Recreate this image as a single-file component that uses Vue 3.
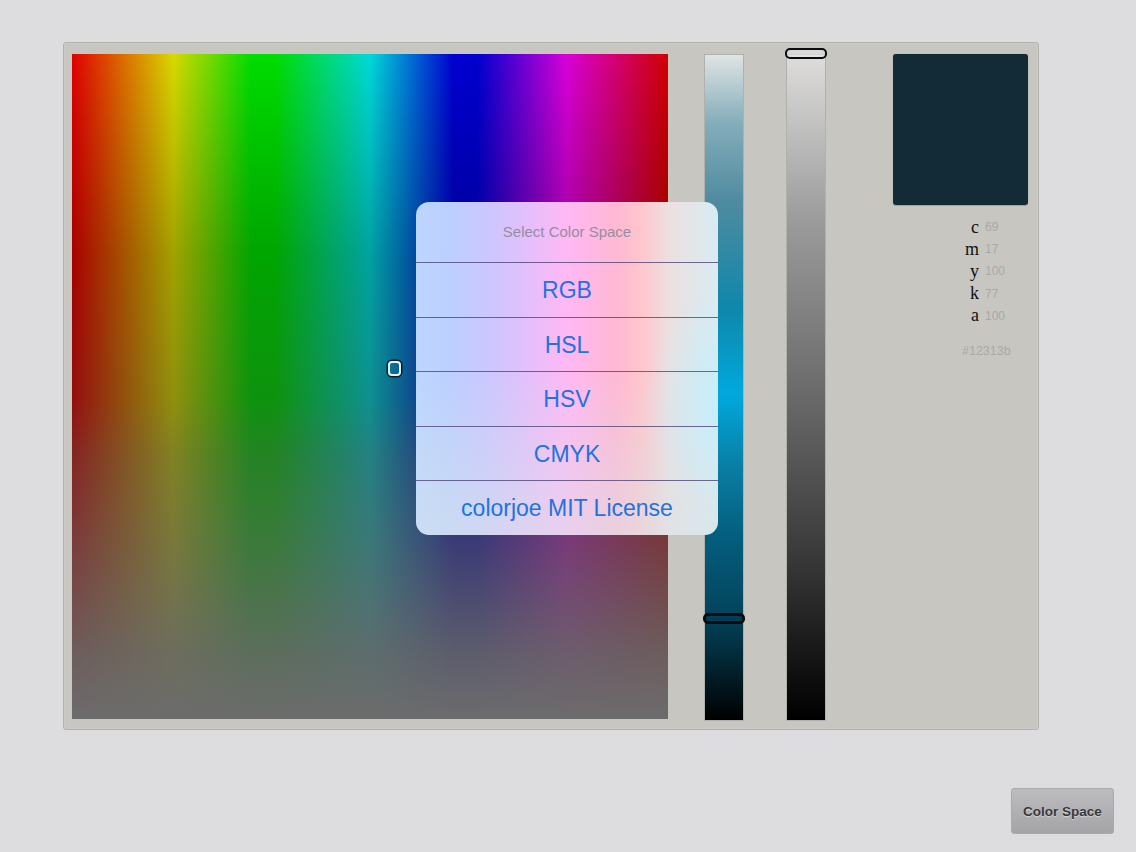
<script setup>
const channels = [
  { key: 'c', value: 69 },
  { key: 'm', value: 17 },
  { key: 'y', value: 100 },
  { key: 'k', value: 77 },
  { key: 'a', value: 100 },
]
const spaces = ['RGB', 'HSL', 'HSV', 'CMYK', 'colorjoe MIT License']
</script>

<template>
  <div class="page">
    <main class="panel">
      <div class="field">
        <span class="picker"></span>
      </div>
      <div class="slider tint">
        <span class="thumb tint-thumb"></span>
      </div>
      <div class="slider gray">
        <span class="thumb gray-thumb"></span>
      </div>
      <aside class="side">
        <div class="swatch"></div>
        <ul class="channels">
          <li v-for="c in channels" :key="c.key" class="channel">
            <span class="letter">{{ c.key }}</span>
            <span class="value">{{ c.value }}</span>
          </li>
        </ul>
        <div class="hex">#12313b</div>
      </aside>
    </main>

    <footer class="footer">
      <button class="space-btn" type="button">Color Space</button>
    </footer>

    <div class="sheet">
      <div class="sheet-title">Select Color Space</div>
      <div v-for="s in spaces" :key="s" class="sheet-row">{{ s }}</div>
    </div>
  </div>
</template>

<style scoped>
.page {
  position: relative;
  box-sizing: border-box;
  height: 852px;
  padding: 42px 97px 0 63px;
  background: #dddcde;
  font-family: "Liberation Sans", Arial, sans-serif;
  overflow: hidden;
}
.panel {
  box-sizing: border-box;
  display: flex;
  align-items: flex-start;
  height: 688px;
  padding: 11px 9px 0 8px;
  background: #c8c6c1;
  border: 1px solid #b2b2ac;
  border-radius: 3px;
  box-shadow: inset 0 0 2px rgba(255, 255, 255, 0.3);
}
.field {
  position: relative;
  flex: none;
  width: 596px;
  height: 665px;
  background:
    linear-gradient(to bottom,
      rgba(0, 0, 0, 0) 0%,
      rgba(0, 0, 0, 0.25) 30%,
      rgba(35, 35, 35, 0.4) 52%,
      rgba(62, 62, 62, 0.56) 60%,
      rgba(83, 83, 83, 0.72) 74%,
      rgba(100, 100, 100, 0.92) 90%,
      #6c6c6c 100%),
    linear-gradient(to right,
      #e00000 0%, #d8d800 17%, #00dc00 30%, #00dc00 34%, #00d8d8 50%,
      #0000d0 64%, #0000d0 68%, #d800d8 83%, #d00000 100%);
}
.picker {
  position: absolute;
  left: 316px;
  top: 307px;
  box-sizing: border-box;
  width: 13px;
  height: 15px;
  border: 2px solid #e4f0f0;
  border-radius: 4px;
  box-shadow: 0 0 0 1.5px #0e1c28;
}
.slider {
  position: relative;
  flex: none;
  box-sizing: border-box;
  width: 40px;
  height: 667px;
  border: 1px solid #b0b1ad;
}
.tint {
  margin-left: 36px;
  background: linear-gradient(to bottom,
    #dfe4e3 0%, #86aebb 10%, #4f8ba0 22%, #0f87ab 38%,
    #00a9dd 51%, #0a7ea4 62%, #045f7f 72%, #03445c 84%,
    #022c3b 90%, #000 100%);
}
.gray {
  margin-left: 42px;
  background: linear-gradient(to bottom, #dedddc 0%, #9b9b9b 25%, #6c6c6c 50%, #3a3a3a 75%, #000 100%);
}
.thumb {
  position: absolute;
  left: -2px;
  box-sizing: border-box;
  width: 42px;
  height: 11px;
  border: 2px solid #080c0e;
  border-radius: 5px;
}
.tint-thumb {
  top: 558px;
  border-width: 3px;
  background: rgba(0, 60, 85, 0.6);
}
.gray-thumb {
  top: -7px;
  border-width: 2px;
  background: rgba(230, 230, 230, 0.6);
}
.side {
  flex: none;
  width: 135px;
  margin-left: 67px;
}
.swatch {
  height: 151px;
  background: #122b36;
  border-radius: 3px;
  box-shadow: 0 1px 0 #9aa6a8, 0 0 1px #7f8f92;
}
.channels {
  list-style: none;
  margin: 11px 0 0;
  padding: 0;
}
.channel {
  display: flex;
  align-items: center;
  height: 22.2px;
}
.letter {
  width: 86px;
  text-align: right;
  font-family: "Liberation Serif", "Times New Roman", serif;
  font-size: 18px;
  color: #111;
}
.value {
  margin-left: 6px;
  font-size: 12px;
  color: #a9a9a7;
}
.hex {
  margin: 17px 0 0 69px;
  font-size: 12.5px;
  color: #a9a9a7;
}
.footer {
  display: flex;
  justify-content: flex-end;
  margin: 58px -75px 0 0;
}
.space-btn {
  width: 103px;
  height: 46px;
  padding: 0;
  border: 1px solid #a9a9ab;
  border-radius: 3px;
  background: linear-gradient(to bottom, #bdbdbf 0%, #a4a4a6 100%);
  color: #38383c;
  font-family: "Liberation Sans", Arial, sans-serif;
  font-size: 13.5px;
  font-weight: 700;
  text-shadow: 0 1px 1px rgba(255, 255, 255, 0.5);
}
.sheet {
  position: absolute;
  left: 416px;
  top: 202px;
  width: 302px;
  border-radius: 13px;
  overflow: hidden;
  background:
    radial-gradient(ellipse 70px 110px at 100% 60%, rgba(190, 240, 255, 0.7), rgba(190, 240, 255, 0) 100%),
    linear-gradient(to bottom, rgba(215, 228, 232, 0) 50%, rgba(215, 228, 232, 0.55) 100%),
    linear-gradient(to right,
      #bcd6ff 0%, #bcd0ff 10%, #c8c8ff 22%, #e0c0fc 35%, #ffb8f4 50%, #ffb8d4 66%,
      #ffc4cc 74%, #ece0e0 84%, #d8ecf2 100%);
}
.sheet-title {
  box-sizing: border-box;
  height: 60px;
  padding-top: 21px;
  text-align: center;
  font-size: 15px;
  line-height: 17px;
  color: #948ea2;
}
.sheet-row {
  box-sizing: border-box;
  height: 54.6px;
  line-height: 54px;
  text-align: center;
  border-top: 1px solid rgba(70, 60, 110, 0.75);
  font-size: 23px;
  color: #2273dc;
}
</style>

<style>
body {
  background: #dddcde;
}
</style>
